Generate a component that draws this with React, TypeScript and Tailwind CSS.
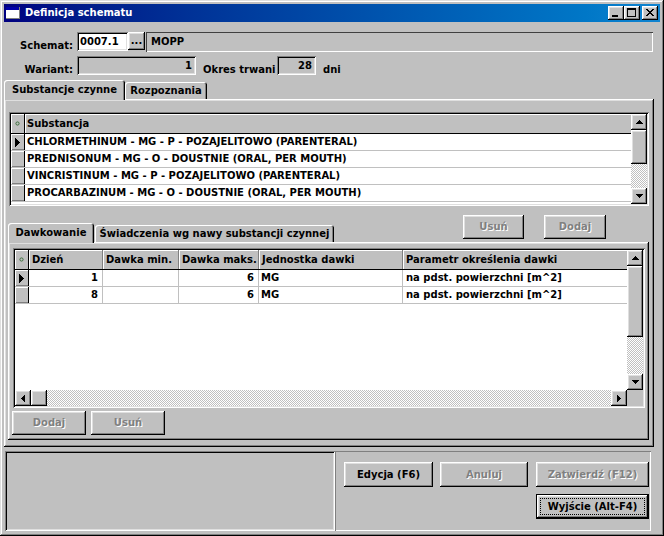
import React from 'react';

// classic 3D edges
const raised =
  'shadow-[inset_-1px_-1px_0_#000,inset_1px_1px_0_#fff,inset_-2px_-2px_0_#808080,inset_2px_2px_0_#dfdfdf]';
const frame =
  'shadow-[inset_-1px_-1px_0_#000,inset_1px_1px_0_#dfdfdf,inset_-2px_-2px_0_#808080,inset_2px_2px_0_#fff]';
const sunken =
  'shadow-[inset_1px_1px_0_#808080,inset_-1px_-1px_0_#fff,inset_2px_2px_0_#000,inset_-2px_-2px_0_#dfdfdf]';
const thin = 'shadow-[inset_1px_1px_0_#808080,inset_-1px_-1px_0_#fff]';
const dither =
  'bg-[image:repeating-conic-gradient(#c0c0c0_0_25%,#fff_0_50%)] bg-[length:2px_2px]';
const disabledText = 'text-[#808080] [text-shadow:1px_1px_0_#fff]';

type Dir = 'up' | 'down' | 'left' | 'right';

function Arrow({ dir }: { dir: Dir }) {
  const rects: React.ReactNode[] = [];
  for (let i = 0; i < 4; i++) {
    if (dir === 'up') rects.push(<rect key={i} x={3 - i} y={i} width={1 + 2 * i} height={1} />);
    if (dir === 'down') rects.push(<rect key={i} x={i} y={i} width={7 - 2 * i} height={1} />);
    if (dir === 'left') rects.push(<rect key={i} x={i} y={3 - i} width={1} height={1 + 2 * i} />);
    if (dir === 'right') rects.push(<rect key={i} x={i} y={i} width={1} height={7 - 2 * i} />);
  }
  const vertical = dir === 'up' || dir === 'down';
  return (
    <svg width={vertical ? 7 : 4} height={vertical ? 4 : 7} shapeRendering="crispEdges" fill="#000">
      {rects}
    </svg>
  );
}

function ScrollBtn({ dir }: { dir: Dir }) {
  return (
    <div className={`w-[16px] h-[16px] shrink-0 bg-[#c0c0c0] flex items-center justify-center ${raised}`}>
      <Arrow dir={dir} />
    </div>
  );
}

function VScroll({ thumb }: { thumb: string }) {
  return (
    <div className="w-[16px] flex flex-col shrink-0">
      <ScrollBtn dir="up" />
      <div className={`${thumb} shrink-0 bg-[#c0c0c0] ${raised}`} />
      <div className={`flex-1 ${dither}`} />
      <ScrollBtn dir="down" />
    </div>
  );
}

function TitleBtn({ kind, className = '' }: { kind: 'min' | 'max' | 'close'; className?: string }) {
  return (
    <div className={`w-[16px] h-[14px] bg-[#c0c0c0] ${raised} ${className}`}>
      <svg width="16" height="14" shapeRendering="crispEdges" fill="#000">
        {kind === 'min' && <rect x="4" y="9" width="6" height="2" />}
        {kind === 'max' && (
          <>
            <rect x="3" y="2" width="9" height="2" />
            <rect x="3" y="2" width="1" height="9" />
            <rect x="11" y="2" width="1" height="9" />
            <rect x="3" y="10" width="9" height="1" />
          </>
        )}
        {kind === 'close' &&
          [0, 1, 2, 3, 4, 5, 6].map((i) => (
            <React.Fragment key={i}>
              <rect x={4 + i} y={3 + i} width="2" height="1" />
              <rect x={10 - i} y={3 + i} width="2" height="1" />
            </React.Fragment>
          ))}
      </svg>
    </div>
  );
}

function AppIcon() {
  return (
    <svg width="14" height="12" shapeRendering="crispEdges">
      <rect x="0" y="0" width="14" height="12" fill="#fff" />
      <rect x="0" y="0" width="14" height="3" fill="#0000a8" />
      <rect x="0" y="11" width="14" height="1" fill="#808080" />
      <rect x="13" y="0" width="1" height="12" fill="#808080" />
    </svg>
  );
}

function Btn({
  children,
  className = '',
  disabled = false,
}: {
  children: React.ReactNode;
  className?: string;
  disabled?: boolean;
}) {
  return (
    <div
      className={`bg-[#c0c0c0] flex items-center justify-center shrink-0 ${raised} ${
        disabled ? disabledText : ''
      } ${className}`}
    >
      {children}
    </div>
  );
}

function Tab({ label, active, className = '' }: { label: string; active?: boolean; className?: string }) {
  return (
    <div
      className={`${
        active ? 'h-[20px] -mb-[1px] relative z-10' : 'h-[17px]'
      } bg-[#c0c0c0] rounded-t-[3px] shadow-[inset_1px_1px_0_#fff,inset_-1px_0_0_#000,inset_-2px_0_0_#808080] flex items-center justify-center shrink-0 ${className}`}
    >
      {label}
    </div>
  );
}

function Dot() {
  return (
    <svg width="5" height="5">
      <circle cx="2.5" cy="2.5" r="1.6" fill="none" stroke="#3c6e3c" strokeWidth="1" />
    </svg>
  );
}

function Pointer() {
  return (
    <svg width="5" height="9" shapeRendering="crispEdges" fill="#000">
      {[0, 1, 2, 3, 4].map((i) => (
        <rect key={i} x={i} y={i} width="1" height={9 - 2 * i} />
      ))}
    </svg>
  );
}

const substances = [
  'CHLORMETHINUM - MG - P - POZAJELITOWO (PARENTERAL)',
  'PREDNISONUM - MG - O - DOUSTNIE (ORAL, PER MOUTH)',
  'VINCRISTINUM - MG - P - POZAJELITOWO (PARENTERAL)',
  'PROCARBAZINUM - MG - O - DOUSTNIE (ORAL, PER MOUTH)',
];

const doses = [
  { day: '1', min: '', max: '6', unit: 'MG', param: 'na pdst. powierzchni [m^2]' },
  { day: '8', min: '', max: '6', unit: 'MG', param: 'na pdst. powierzchni [m^2]' },
];

const indicator = 'w-[14px] shrink-0 border-r border-black bg-[#c0c0c0] flex items-center justify-center';
const indicatorCell = `${indicator} shadow-[inset_1px_1px_0_#fff,inset_0_-1px_0_#808080]`;
const headCell = 'shrink-0 h-full flex items-center pl-[3px] border-r border-[#808080] shadow-[inset_1px_1px_0_#fff]';
const cell = 'shrink-0 h-full flex items-center border-r border-[#c0c0c0]';

export default function App() {
  return (
    <div
      className={`w-[664px] h-[536px] bg-[#c0c0c0] p-[4px] flex flex-col font-['DejaVu_Sans',sans-serif] font-bold text-[10px] leading-none text-black ${frame}`}
    >
      {/* Title bar */}
      <div className="h-[18px] shrink-0 flex items-center bg-linear-to-r from-[#000080] to-[#1084d0] text-white px-[2px]">
        <AppIcon />
        <span className="ml-[5px]">Definicja schematu</span>
        <div className="ml-auto flex">
          <TitleBtn kind="min" />
          <TitleBtn kind="max" />
          <TitleBtn kind="close" className="ml-[2px]" />
        </div>
      </div>

      {/* Schemat */}
      <div className="mt-[10px] h-[19px] flex">
        <div className="w-[73px] pr-[4px] text-right self-end">Schemat:</div>
        <div className={`w-[51px] h-[19px] bg-white flex items-center pl-[3px] ${sunken}`}>0007.1</div>
        <Btn className="w-[17px] h-[18px]">...</Btn>
        <div
          className={`ml-[1px] w-[507px] h-[20px] flex items-center pl-[5px] shadow-[inset_1px_1px_0_#404040,inset_-1px_-1px_0_#fff]`}
        >
          MOPP
        </div>
      </div>

      {/* Wariant / Okres */}
      <div className="mt-[5px] h-[19px] flex">
        <div className="w-[73px] pr-[4px] text-right self-end">Wariant:</div>
        <div className={`w-[119px] h-[19px] flex items-center justify-end pr-[4px] ${sunken}`}>1</div>
        <div className="ml-[7px] w-[74px] self-end">Okres trwani</div>
        <div className={`w-[39px] h-[19px] flex items-center justify-end pr-[4px] ${sunken}`}>28</div>
        <div className="ml-[7px] self-end">dni</div>
      </div>

      {/* Outer tabs */}
      <div className="mt-[5px] h-[19px] flex items-end">
        <Tab label="Substancje czynne" active className="w-[121px]" />
        <Tab label="Rozpoznania" className="w-[82px]" />
      </div>

      <div className={`w-[650px] h-[348px] shrink-0 flex flex-col pt-[13px] ${raised}`}>
        {/* Substances grid */}
        <div className={`ml-[5px] w-[640px] h-[94px] shrink-0 p-[2px] bg-white ${sunken}`}>
          <div className="flex h-full">
            <div className="flex-1 flex flex-col bg-white">
              <div className="h-[20px] shrink-0 flex bg-[#c0c0c0] border-b border-black">
                <div className={`${indicator} shadow-[inset_1px_1px_0_#fff]`}>
                  <Dot />
                </div>
                <div className="flex-1 h-full flex items-center pl-[2px] shadow-[inset_1px_1px_0_#fff]">
                  Substancja
                </div>
              </div>
              {substances.map((s, i) => (
                <div key={s} className="h-[17px] shrink-0 flex border-b border-[#c0c0c0]">
                  <div className={indicatorCell}>{i === 0 && <Pointer />}</div>
                  <div className="flex-1 flex items-center pl-[2px]">{s}</div>
                </div>
              ))}
            </div>
            <VScroll thumb="h-[34px]" />
          </div>
        </div>

        {/* Inner tabs + buttons */}
        <div className="h-[36px] shrink-0 flex items-end">
          <Tab label="Dawkowanie" active className="ml-[4px] w-[86px]" />
          <Tab label="Świadczenia wg nawy substancji czynnej" className="ml-[1px] w-[239px]" />
          <div className="ml-auto mr-[48px] self-start mt-[9px] flex">
            <Btn disabled className="w-[61px] h-[24px]">
              Usuń
            </Btn>
            <Btn disabled className="ml-[20px] w-[62px] h-[24px]">
              Dodaj
            </Btn>
          </div>
        </div>

        <div className={`ml-[4px] w-[641px] h-[198px] shrink-0 flex flex-col pt-[6px] ${raised}`}>
          {/* Dosage grid */}
          <div className={`ml-[5px] w-[632px] h-[160px] shrink-0 p-[2px] bg-white ${sunken}`}>
            <div className="flex flex-col h-full">
              <div className="flex flex-1 min-h-0">
                <div className="flex-1 flex flex-col bg-white">
                  <div className="h-[20px] shrink-0 flex bg-[#c0c0c0] border-b border-black">
                    <div className={`${indicator} shadow-[inset_1px_1px_0_#fff]`}>
                      <Dot />
                    </div>
                    <div className={`${headCell} w-[74px] pl-[2px]`}>Dzień</div>
                    <div className={`${headCell} w-[76px]`}>Dawka min.</div>
                    <div className={`${headCell} w-[80px]`}>Dawka maks.</div>
                    <div className={`${headCell} w-[144px]`}>Jednostka dawki</div>
                    <div className="flex-1 h-full flex items-center pl-[3px] shadow-[inset_1px_1px_0_#fff]">
                      Parametr określenia dawki
                    </div>
                  </div>
                  {doses.map((d, i) => (
                    <div key={i} className="h-[17px] shrink-0 flex border-b border-[#c0c0c0]">
                      <div className={indicatorCell}>{i === 0 && <Pointer />}</div>
                      <div className={`${cell} w-[74px] justify-end pr-[4px]`}>{d.day}</div>
                      <div className={`${cell} w-[76px] justify-end pr-[4px]`}>{d.min}</div>
                      <div className={`${cell} w-[80px] justify-end pr-[4px]`}>{d.max}</div>
                      <div className={`${cell} w-[144px] pl-[2px]`}>{d.unit}</div>
                      <div className="flex-1 flex items-center pl-[3px]">{d.param}</div>
                    </div>
                  ))}
                </div>
                <VScroll thumb="h-[71px]" />
              </div>
              <div className="h-[16px] shrink-0 flex">
                <ScrollBtn dir="left" />
                <div className={`w-[16px] shrink-0 bg-[#c0c0c0] ${raised}`} />
                <div className={`flex-1 ${dither}`} />
                <ScrollBtn dir="right" />
                <div className="w-[16px] shrink-0 bg-[#c0c0c0]" />
              </div>
            </div>
          </div>

          <div className="mt-[3px] ml-[4px] flex">
            <Btn disabled className="w-[74px] h-[24px]">
              Dodaj
            </Btn>
            <Btn disabled className="ml-[5px] w-[74px] h-[24px]">
              Usuń
            </Btn>
          </div>
        </div>
      </div>

      {/* Bottom panels */}
      <div className="mt-[4px] h-[80px] shrink-0 flex">
        <div className={`ml-[1px] w-[330px] ${sunken}`} />
        <div className={`w-[316px] pt-[11px] pl-[9px] ${thin}`}>
          <div className="flex">
            <Btn className="w-[89px] h-[25px]">Edycja (F6)</Btn>
            <Btn disabled className="ml-[7px] w-[88px] h-[25px]">
              Anuluj
            </Btn>
            <Btn disabled className="ml-[8px] w-[113px] h-[25px]">
              Zatwierdź (F12)
            </Btn>
          </div>
          <div className="mt-[7px] ml-[192px] flex">
            <div
              className={`relative w-[113px] h-[25px] bg-[#c0c0c0] flex items-center justify-center shadow-[inset_0_0_0_1px_#000,inset_-2px_-2px_0_#000,inset_2px_2px_0_#fff,inset_-3px_-3px_0_#808080,inset_3px_3px_0_#dfdfdf]`}
            >
              Wyjście (Alt-F4)
              <div className="absolute inset-[4px] border border-dotted border-black" />
            </div>
          </div>
        </div>
      </div>
    </div>
  );
}
